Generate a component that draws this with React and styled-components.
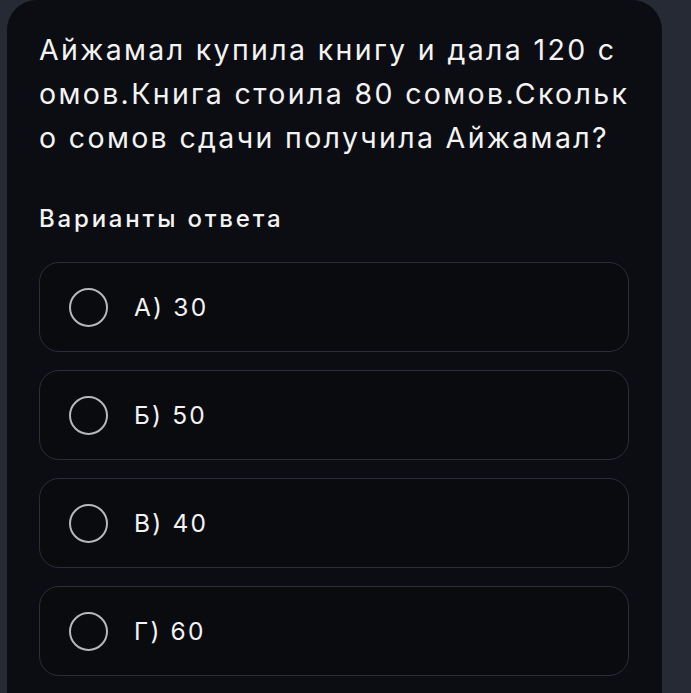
import React from 'react';
import styled, { createGlobalStyle } from 'styled-components';

const GlobalStyle = createGlobalStyle`
  html, body {
    margin: 0;
    padding: 0;
    background: #262a34;
  }
  body {
    font-family: Inter, "Noto Sans", sans-serif;
  }
`;

const Page = styled.div`
  height: 693px;
  overflow: hidden;
  padding-left: 7px;
`;

const Card = styled.div`
  width: 655px;
  min-height: 720px;
  box-sizing: border-box;
  background: #0b0d12;
  border-radius: 30px 30px 0 0;
  padding: 28px 30px 0 32px;
`;

const Question = styled.div`
  color: #f3f3f4;
  font-size: 28.5px;
  line-height: 44px;
  letter-spacing: 2.35px;
  font-weight: 400;
  word-break: break-all;
`;

const Heading = styled.div`
  margin-top: 43px;
  color: #f3f3f4;
  font-size: 24px;
  line-height: 32px;
  letter-spacing: 2.8px;
  font-weight: 500;
`;

const Options = styled.div`
  margin-top: 27px;
  margin-right: 3px;
  display: flex;
  flex-direction: column;
  gap: 18px;
`;

const Option = styled.div`
  height: 90px;
  box-sizing: border-box;
  display: flex;
  align-items: center;
  gap: 26px;
  padding-left: 29px;
  background: #090b0f;
  border: 1.5px solid #2a2e38;
  border-radius: 20px;
`;

const Radio = styled.span`
  width: 39px;
  height: 39px;
  box-sizing: border-box;
  border-radius: 50%;
  border: 2.5px solid #b7b8bb;
  flex-shrink: 0;
`;

const Label = styled.span`
  color: #f3f3f4;
  font-size: 24.5px;
  line-height: 32px;
  letter-spacing: 2.2px;
`;

const answers = ['А) 30', 'Б) 50', 'В) 40', 'Г) 60'];

const App = () => (
  <>
    <GlobalStyle />
    <Page>
      <Card>
        <Question>
          Айжамал купила книгу и дала 120 сомов.Книга стоила 80 сомов.Сколько сомов сдачи получила Айжамал?
        </Question>
        <Heading>Варианты ответа</Heading>
        <Options>
          {answers.map(a => (
            <Option key={a}>
              <Radio />
              <Label>{a}</Label>
            </Option>
          ))}
        </Options>
      </Card>
    </Page>
  </>
);

export default App;
